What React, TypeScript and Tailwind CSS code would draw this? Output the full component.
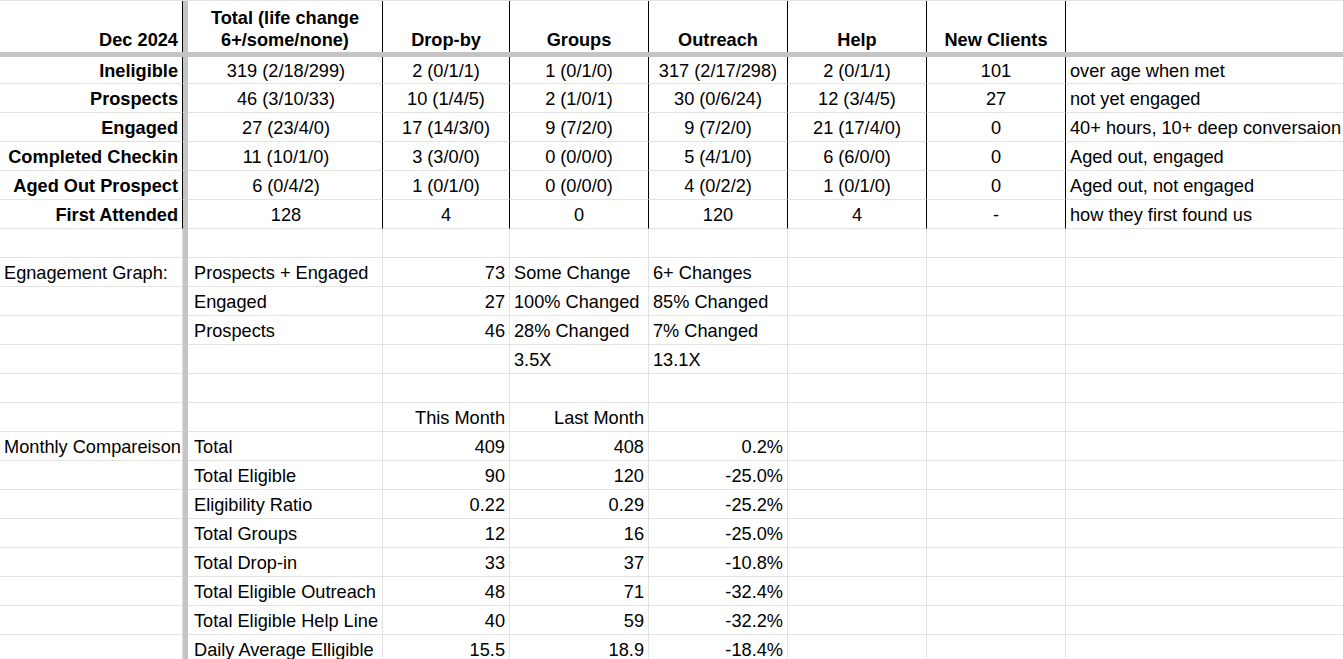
import React from "react";

type Al = "l" | "c" | "r";
type C = { t?: string; a?: Al; b?: boolean };

const W = [
  "w-[183px]",
  "w-[195px]",
  "w-[127px]",
  "w-[139px]",
  "w-[139px]",
  "w-[139px]",
  "w-[139px]",
  "flex-1 min-w-0",
];

const J: Record<Al, string> = {
  l: "justify-start",
  c: "justify-center",
  r: "justify-end",
};

function Bar() {
  return <div className="w-[5px] shrink-0 bg-[#c4c4c4]" />;
}

function Row({ cells, dark, h }: { cells: C[]; dark?: boolean; h: string }) {
  const full: C[] = [...cells];
  while (full.length < 8) full.push({});
  return (
    <div className={`flex ${h}`}>
      {full.map((c, i) => {
        const last = i === 7;
        const rb = last
          ? ""
          : dark
          ? "border-r border-r-black"
          : "border-r border-r-[#e2e2e2]";
        const pad = i === 1 ? "pl-[6px] pr-[4px]" : "px-[4px]";
        const cell = (
          <div
            key={i}
            className={`${W[i]} ${last ? "" : "shrink-0"} flex items-center ${J[c.a ?? "l"]} ${pad} pt-[3px] border-b border-b-[#e2e2e2] ${rb} overflow-hidden whitespace-nowrap ${c.b ? "font-bold" : ""}`}
          >
            <span>{c.t ?? ""}</span>
          </div>
        );
        if (i === 0)
          return (
            <React.Fragment key={i}>
              {cell}
              <Bar />
            </React.Fragment>
          );
        return cell;
      })}
    </div>
  );
}

const top: string[][] = [
  ["Ineligible", "319 (2/18/299)", "2 (0/1/1)", "1 (0/1/0)", "317 (2/17/298)", "2 (0/1/1)", "101", "over age when met"],
  ["Prospects", "46 (3/10/33)", "10 (1/4/5)", "2 (1/0/1)", "30 (0/6/24)", "12 (3/4/5)", "27", "not yet engaged"],
  ["Engaged", "27 (23/4/0)", "17 (14/3/0)", "9 (7/2/0)", "9 (7/2/0)", "21 (17/4/0)", "0", "40+ hours, 10+ deep conversaion"],
  ["Completed Checkin", "11 (10/1/0)", "3 (3/0/0)", "0 (0/0/0)", "5 (4/1/0)", "6 (6/0/0)", "0", "Aged out, engaged"],
  ["Aged Out Prospect", "6 (0/4/2)", "1 (0/1/0)", "0 (0/0/0)", "4 (0/2/2)", "1 (0/1/0)", "0", "Aged out, not engaged"],
  ["First Attended", "128", "4", "0", "120", "4", "-", "how they first found us"],
];

const monthly: string[][] = [
  ["Monthly Compareison", "Total", "409", "408", "0.2%"],
  ["", "Total Eligible", "90", "120", "-25.0%"],
  ["", "Eligibility Ratio", "0.22", "0.29", "-25.2%"],
  ["", "Total Groups", "12", "16", "-25.0%"],
  ["", "Total Drop-in", "33", "37", "-10.8%"],
  ["", "Total Eligible Outreach", "48", "71", "-32.4%"],
  ["", "Total Eligible Help Line", "40", "59", "-32.2%"],
  ["", "Daily Average Elligible", "15.5", "18.9", "-18.4%"],
];

export default function App() {
  const hd = "shrink-0 flex items-end justify-center pb-[1px] px-[4px] border-r border-r-black font-bold text-center leading-[22px]";
  return (
    <div
      className="w-[1343px] h-[659px] overflow-hidden bg-white text-black text-[18.2px]"
      style={{ fontFamily: '"Liberation Sans", Arial, sans-serif' }}
    >
      <div className="h-[1px] bg-[#e2e2e2]" />
      <div className="flex h-[51px]">
        <div className={`${W[0]} ${hd} justify-end`}>Dec 2024</div>
        <Bar />
        <div className={`${W[1]} ${hd}`}>
          Total (life change
          <br />
          6+/some/none)
        </div>
        <div className={`${W[2]} ${hd}`}>Drop-by</div>
        <div className={`${W[3]} ${hd}`}>Groups</div>
        <div className={`${W[4]} ${hd}`}>Outreach</div>
        <div className={`${W[5]} ${hd}`}>Help</div>
        <div className={`${W[6]} ${hd}`}>New Clients</div>
        <div className="flex-1" />
      </div>
      <div className="h-[5px] bg-[#c4c4c4]" />
      {top.map((r, i) => (
        <Row
          key={i}
          dark
          h={i === 0 ? "h-[27px]" : "h-[29px]"}
          cells={[
            { t: r[0], a: "r", b: true },
            { t: r[1], a: "c" },
            { t: r[2], a: "c" },
            { t: r[3], a: "c" },
            { t: r[4], a: "c" },
            { t: r[5], a: "c" },
            { t: r[6], a: "c" },
            { t: r[7], a: "l" },
          ]}
        />
      ))}
      <Row h="h-[29px]" cells={[]} />
      <Row
        h="h-[29px]"
        cells={[
          { t: "Egnagement Graph:" },
          { t: "Prospects + Engaged" },
          { t: "73", a: "r" },
          { t: "Some Change" },
          { t: "6+ Changes" },
        ]}
      />
      <Row
        h="h-[29px]"
        cells={[{}, { t: "Engaged" }, { t: "27", a: "r" }, { t: "100% Changed" }, { t: "85% Changed" }]}
      />
      <Row
        h="h-[29px]"
        cells={[{}, { t: "Prospects" }, { t: "46", a: "r" }, { t: "28% Changed" }, { t: "7% Changed" }]}
      />
      <Row h="h-[29px]" cells={[{}, {}, {}, { t: "3.5X" }, { t: "13.1X" }]} />
      <Row h="h-[29px]" cells={[]} />
      <Row
        h="h-[29px]"
        cells={[{}, {}, { t: "This Month", a: "r" }, { t: "Last Month", a: "r" }, {}]}
      />
      {monthly.map((r, i) => (
        <Row
          key={i}
          h="h-[29px]"
          cells={[
            { t: r[0] },
            { t: r[1] },
            { t: r[2], a: "r" },
            { t: r[3], a: "r" },
            { t: r[4], a: "r" },
          ]}
        />
      ))}
    </div>
  );
}
